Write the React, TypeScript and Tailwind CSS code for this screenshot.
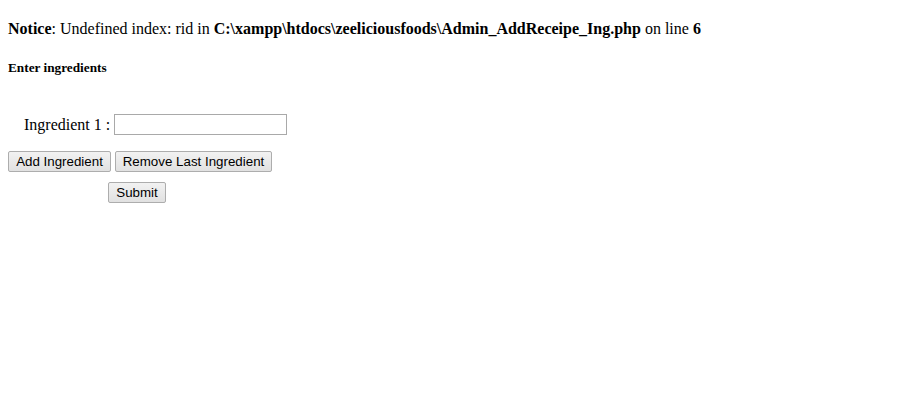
import React from 'react'

const btn =
  "h-[21px] border border-[#adadad] rounded-[2px] bg-gradient-to-b from-[#f2f2f2] to-[#e1e1e1] text-[13.33px] leading-none text-black font-['Liberation_Sans',Arial,sans-serif] text-center"

function App() {
  return (
    <div className="min-h-[410px] bg-white p-2 font-['Liberation_Serif','Times_New_Roman',serif] text-black">
      <div className="mt-[12px] text-[16px] leading-[18px] whitespace-nowrap">
        <b>Notice</b>: Undefined index: rid in <b>C:\xampp\htdocs\zeeliciousfoods\Admin_AddReceipe_Ing.php</b> on line <b>6</b>
      </div>

      <h5 className="mt-[22px] text-[13.28px] leading-[15px] font-bold">Enter ingredients</h5>

      <div className="mt-[39px] flex items-center h-[21px]">
        <span className="pl-4 text-[16px] leading-[18px] w-[106px] whitespace-nowrap">Ingredient 1 :</span>
        <input type="text" className="w-[173px] h-[21px] border border-[#a9a9a9] bg-white outline-none px-1" />
      </div>

      <div className="mt-[16px] flex gap-[4px]">
        <button className={`${btn} w-[103px]`}>Add Ingredient</button>
        <button className={`${btn} w-[157px]`}>Remove Last Ingredient</button>
      </div>

      <div className="mt-[10px] flex pl-[100px]">
        <button className={`${btn} w-[58px]`}>Submit</button>
      </div>
    </div>
  )
}

export default App
